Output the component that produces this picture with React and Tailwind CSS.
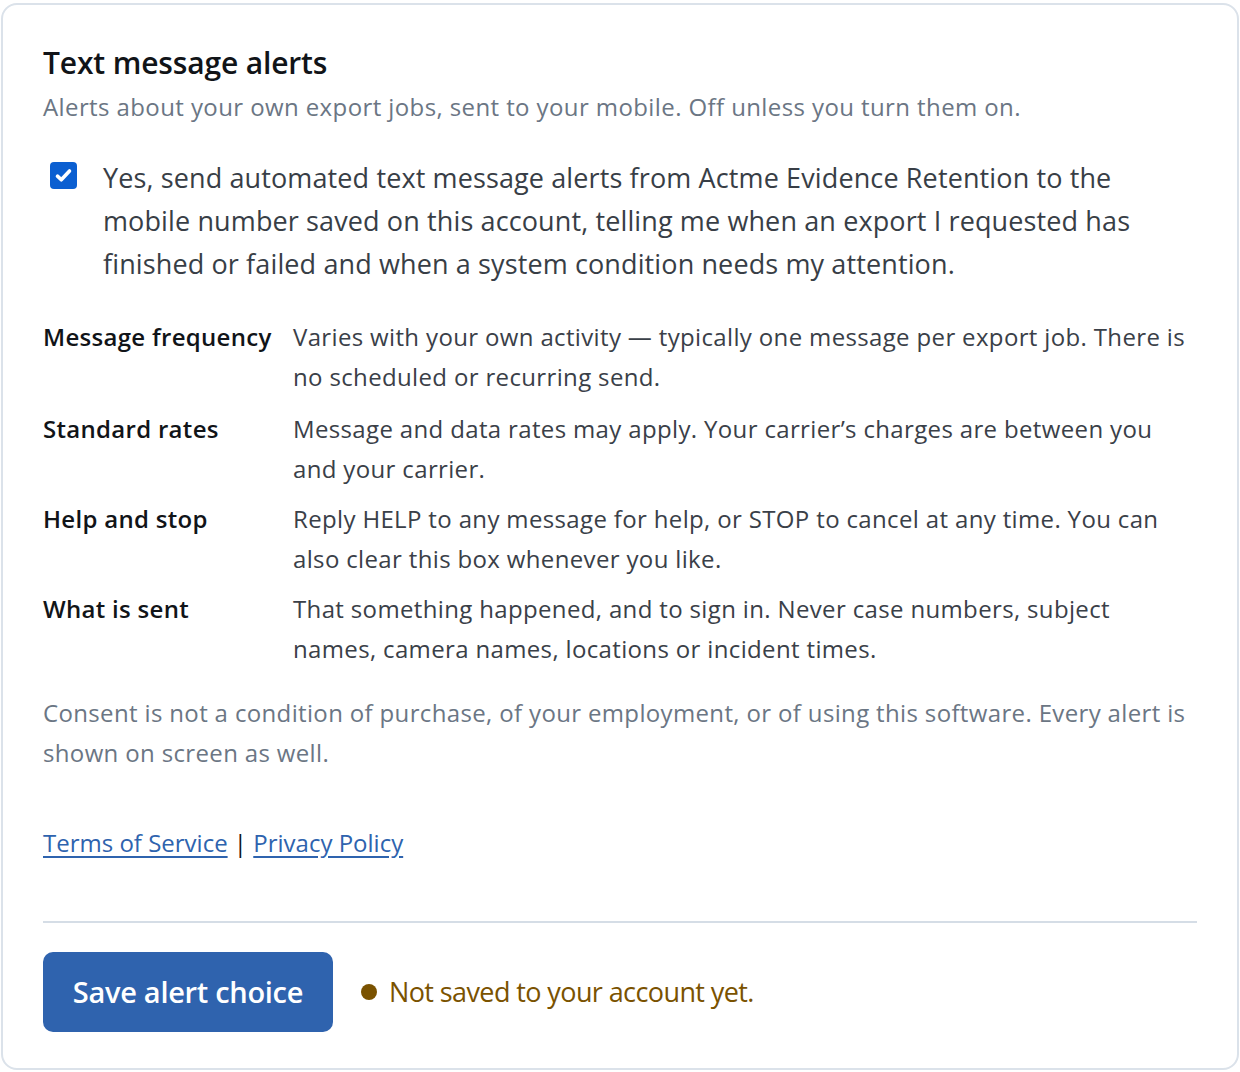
import React, { useState } from "react";

const rows = [
  {
    label: "Message frequency",
    text: "Varies with your own activity — typically one message per export job. There is no scheduled or recurring send.",
  },
  {
    label: "Standard rates",
    text: "Message and data rates may apply. Your carrier’s charges are between you and your carrier.",
  },
  {
    label: "Help and stop",
    text: "Reply HELP to any message for help, or STOP to cancel at any time. You can also clear this box whenever you like.",
  },
  {
    label: "What is sent",
    text: "That something happened, and to sign in. Never case numbers, subject names, camera names, locations or incident times.",
  },
];

const App = () => {
  const [checked, setChecked] = useState(true);

  return (
    <div
      className="bg-white w-[1240px] h-[1072px] pt-[3px] px-[1px]"
      style={{ fontFamily: '"Open Sans", "Noto Sans", sans-serif' }}
    >
      <div className="h-[1067px] border-2 border-[#dbe2ea] rounded-[16px] px-[40px] pt-[38px]">
        <h2 className="text-[30px] leading-[40px] font-semibold text-[#111418] tracking-[-0.15px]">
          Text message alerts
        </h2>
        <p className="mt-[8px] text-[24px] leading-[32px] text-[#6b7684] tracking-[0.4px]">
          Alerts about your own export jobs, sent to your mobile. Off unless you turn them on.
        </p>

        {/* consent checkbox */}
        <label className="mt-[33px] flex gap-[26px] cursor-pointer">
          <span
            onClick={() => setChecked(!checked)}
            className={`mt-[6px] ml-[7px] w-[27px] h-[27px] shrink-0 rounded-[4px] flex items-center justify-center ${
              checked ? "bg-[#0b5fd1]" : "border-2 border-gray-500 bg-white"
            }`}
          >
            {checked && (
              <svg width="19" height="19" viewBox="0 0 18 18" fill="none">
                <path
                  d="M3.3 9.6l3.6 3.5 7.8-8.4"
                  stroke="white"
                  strokeWidth="3.4"
                  strokeLinecap="round"
                  strokeLinejoin="round"
                />
              </svg>
            )}
          </span>
          <span className="text-[27px] leading-[43px] text-[#383e46] tracking-[0.12px]">
            Yes, send automated text message alerts from Actme Evidence Retention to the mobile
            number saved on this account, telling me when an export I requested has finished or
            failed and when a system condition needs my attention.
          </span>
        </label>

        {/* details */}
        <div className="mt-[32px] flex flex-col gap-[10px]">
          {rows.map((r, i) => (
            <div key={r.label} className={`flex ${i === 0 ? "mb-[2px]" : ""}`}>
              <div className="w-[250px] shrink-0 text-[24px] leading-[40px] font-semibold text-[#111418] tracking-[0.3px]">
                {r.label}
              </div>
              <div className="text-[24px] leading-[40px] text-[#3a4048] tracking-[0.35px]">
                {r.text}
              </div>
            </div>
          ))}
        </div>

        <p className="mt-[24px] text-[24px] leading-[40px] text-[#6b7684] tracking-[0.35px]">
          Consent is not a condition of purchase, of your employment, or of using this software.
          Every alert is shown on screen as well.
        </p>

        <div className="mt-[50px] text-[24px] leading-[40px] text-[#111418]">
          <a href="#" className="text-[#2e63ae] underline underline-offset-[4px]">
            Terms of Service
          </a>{" "}
          |{" "}
          <a href="#" className="text-[#2e63ae] underline underline-offset-[4px]">
            Privacy Policy
          </a>
        </div>

        <div className="mt-[58px] border-t-2 border-[#d5dde6]" />

        <div className="mt-[29px] flex items-center gap-[28px]">
          <button className="w-[290px] h-[80px] rounded-[10px] bg-[#2f63ae] text-white text-[29px] font-semibold tracking-[-0.3px]">
            Save alert choice
          </button>
          <div className="flex items-center gap-[12px] text-[27px] text-[#7a5200] tracking-[-0.6px]">
            <span className="w-[16px] h-[16px] rounded-full bg-[#7a5200]" />
            Not saved to your account yet.
          </div>
        </div>
      </div>
    </div>
  );
};

export default App;
